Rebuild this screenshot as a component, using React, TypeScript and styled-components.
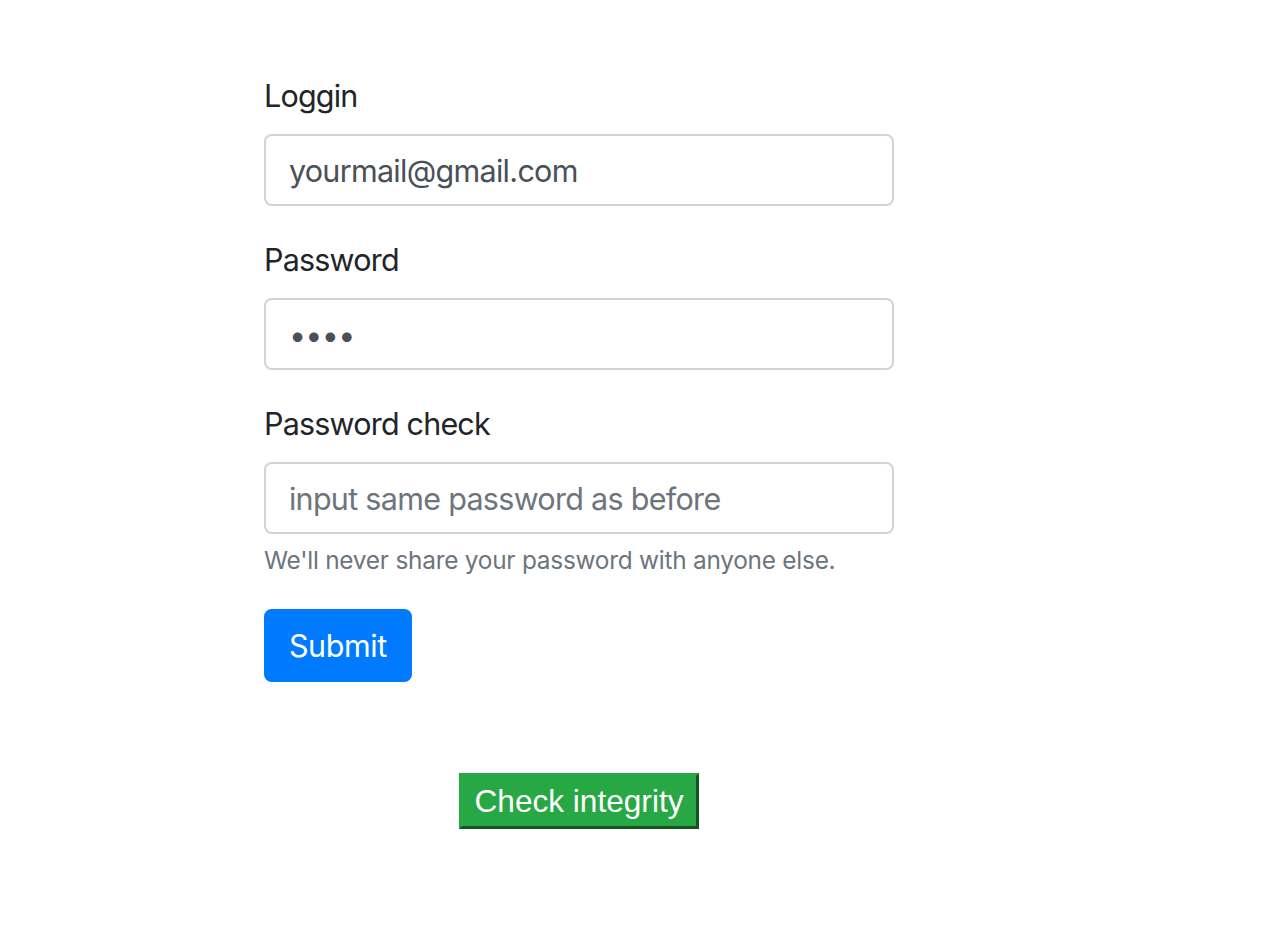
import React from "react";
import styled, { createGlobalStyle } from "styled-components";

const S = 1.907;
const px = (v: number) => `${(v * S).toFixed(2)}px`;

const Global = createGlobalStyle`
  html, body { margin: 0; padding: 0; background: #fff; }
  body {
    font-family: Inter, "Noto Sans", Roboto, sans-serif;
    font-size: ${px(16)};
    line-height: 1.5;
    color: #212529;
  }
  * { box-sizing: border-box; }
`;

const Page = styled.div`
  padding: 73px 0 0 264px;
`;

const Form = styled.form`
  width: 630px;
  display: flex;
  flex-direction: column;
`;

const Group = styled.div`
  margin-bottom: ${px(16)};
  display: flex;
  flex-direction: column;
`;

const Label = styled.label`
  font-size: ${px(16)};
  line-height: 1.5;
  color: #212529;
  margin-bottom: ${px(8)};
  letter-spacing: -0.8px;
`;

const Input = styled.input`
  display: block;
  width: 100%;
  height: ${px(38)};
  padding: ${px(6)} ${px(12)};
  font-family: inherit;
  font-size: ${px(16)};
  line-height: 1.5;
  color: #495057;
  background: #fff;
  border: 2px solid #ced4da;
  border-radius: ${px(4)};
  outline: none;
  letter-spacing: -0.7px;
  &::placeholder { color: #6c757d; opacity: 1; }
`;

const Help = styled.small`
  display: block;
  margin-top: ${px(4)};
  font-size: ${px(12.8)};
  line-height: 1.5;
  color: #6c757d;
  letter-spacing: -0.25px;
`;

const SubmitButton = styled.button`
  align-self: flex-start;
  height: ${px(38)};
  padding: ${px(6)} ${px(12)};
  font-family: inherit;
  font-size: ${px(16)};
  line-height: 1.5;
  color: #fff;
  background: #007bff;
  border: 2px solid #007bff;
  border-radius: ${px(4)};
  letter-spacing: -0.4px;
`;

const CheckRow = styled.div`
  width: 630px;
  display: flex;
  justify-content: center;
  margin-top: ${px(48)};
`;

const CheckButton = styled.button`
  font-family: "Liberation Sans", Arial, sans-serif;
  font-size: 31.6px;
  line-height: 47px;
  padding: 1.5px 12.5px;
  color: #fff;
  background: #28a745;
  border: 3.8px solid #28a745;
  border-right-color: #145523;
  border-bottom-color: #145523;
`;

export default function App() {
  return (
    <>
      <Global />
      <Page>
        <Form onSubmit={(e) => e.preventDefault()}>
          <Group>
            <Label>Loggin</Label>
            <Input type="email" defaultValue="yourmail@gmail.com" />
          </Group>
          <Group>
            <Label>Password</Label>
            <Input type="password" defaultValue="1234" />
          </Group>
          <Group>
            <Label>Password check</Label>
            <Input type="password" placeholder="input same password as before" />
            <Help>We'll never share your password with anyone else.</Help>
          </Group>
          <SubmitButton type="submit">Submit</SubmitButton>
        </Form>
        <CheckRow>
          <CheckButton type="button">Check integrity</CheckButton>
        </CheckRow>
      </Page>
    </>
  );
}
